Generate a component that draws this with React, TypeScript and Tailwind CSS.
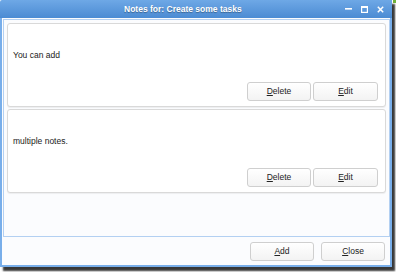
import React from 'react';

const font = { fontFamily: '"Liberation Sans", Arial, sans-serif' };

function Btn({ label, w = 'w-[64px]' }: { label: string; w?: string }) {
  return (
    <button
      className={`${w} h-[19px] rounded-[3px] border border-[#cfcfcf] bg-gradient-to-b from-white to-[#f3f3f3] text-[8.5px] leading-none text-[#222]`}
    >
      <span className="underline underline-offset-1">{label[0]}</span>
      {label.slice(1)}
    </button>
  );
}

function Note({ text }: { text: string }) {
  return (
    <div className="h-[84px] rounded-[3px] border border-[#d9d9d9] bg-white shadow-[0_1px_1px_rgba(0,0,0,0.06)] flex flex-col">
      <div className="mt-[26px] pl-[5px] h-[10px] text-[8.5px] leading-[10px] text-[#1a1a1a]">{text}</div>
      <div className="mt-[22px] flex justify-end gap-[2px] pr-[7px]">
        <Btn label="Delete" />
        <Btn label="Edit" w="w-[65px]" />
      </div>
    </div>
  );
}

export default function App() {
  return (
    <div className="w-[396px] h-[272px] bg-white overflow-hidden relative" style={font}>
      <div className="w-[392px] h-[267px] flex flex-col bg-[#fbfcfe] rounded-tl-[2px] shadow-[3px_4px_2px_rgba(20,20,20,0.85)]">
        {/* title bar */}
        <div className="h-[18px] shrink-0 bg-gradient-to-b from-[#6ea8e6] to-[#4b8bd3] flex items-center rounded-tl-[2px]">
          <div className="flex-1 pl-[124px] text-[8.5px] font-bold text-white [text-shadow:0_1px_1px_rgba(0,0,0,0.35)]">
            Notes for: Create some tasks
          </div>
          <div className="flex items-center gap-[9px] pr-[8px]">
            <svg width="7" height="7" viewBox="0 0 7 7"><rect x="0" y="2" width="7" height="1.6" fill="#fff" /></svg>
            <svg width="7" height="7" viewBox="0 0 7 7"><rect x="0.6" y="0.6" width="5.8" height="5.8" fill="none" stroke="#fff" strokeWidth="1.2" /><rect x="0" y="0" width="7" height="2" fill="#fff" /></svg>
            <svg width="7" height="7" viewBox="0 0 7 7"><path d="M0.8 0.8 L6.2 6.2 M6.2 0.8 L0.8 6.2" stroke="#fff" strokeWidth="1.5" /></svg>
          </div>
        </div>
        {/* body */}
        <div className="flex-1 flex flex-col border-x-2 border-b-2 border-[#78aeea] bg-[#fbfcfe] pl-[1px]">
          <div className="mt-[1px] h-[218px] border border-[#b3d0f2] bg-[#fbfcfe] px-[3px] pt-[3px] flex flex-col gap-[2px]">
            <Note text="You can add" />
            <Note text="multiple notes." />
          </div>
          <div className="flex justify-end gap-[7px] pr-[5px] pt-[5px]">
            <Btn label="Add" />
            <Btn label="Close" />
          </div>
        </div>
      </div>
      <div className="absolute top-0 right-0 w-[3px] h-[3px] bg-[#6fb03a]" />
    </div>
  );
}
